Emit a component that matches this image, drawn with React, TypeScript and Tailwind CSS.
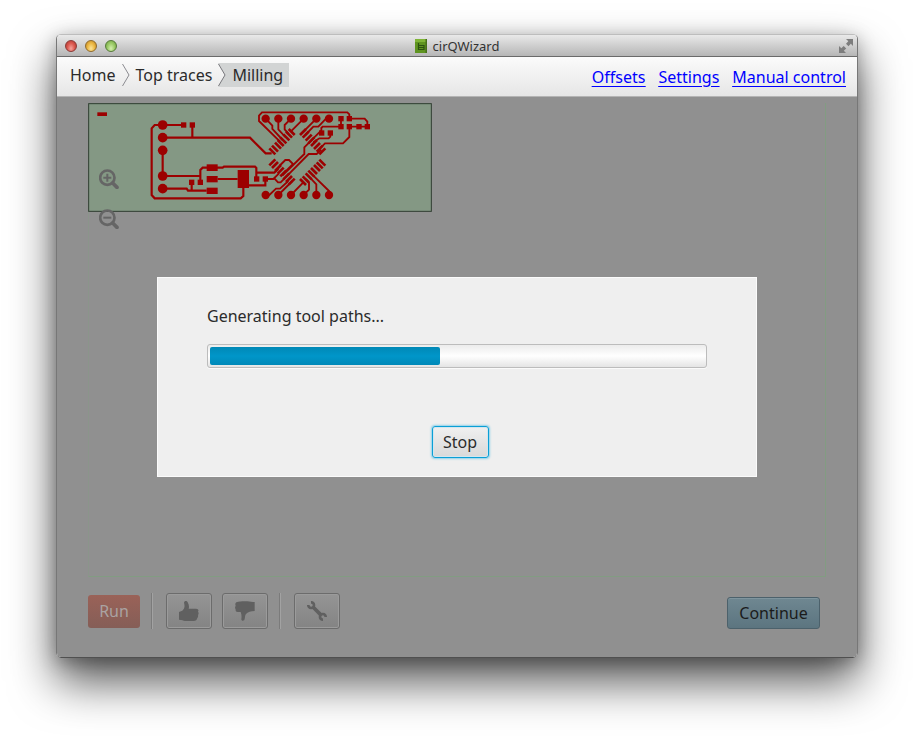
import React from "react";

const lights = [
  { name: "Close", color: "bg-radial-[at_50%_75%] from-[#f5a49c] via-[#dc5a50] to-[#a8322c] border-[#8a3a36]" },
  { name: "Minimize", color: "bg-radial-[at_50%_75%] from-[#fbe49a] via-[#ecb844] to-[#b98220] border-[#8f6a2c]" },
  { name: "Zoom", color: "bg-radial-[at_50%_75%] from-[#d5efb0] via-[#9ccb68] to-[#6b9c3c] border-[#567a3a]" },
];

function TitleBar() {
  return (
    <header className="grid h-[22px] grid-cols-[1fr_auto_1fr] items-center rounded-t-[4px] border-b border-[#6a6a6a] bg-linear-to-b from-[#e9e9e9] to-[#b6b6b6] px-1">
      <div className="flex gap-2 pl-1">
        {lights.map((l) => (
          <button key={l.name} aria-label={l.name} className={`size-3 rounded-full border ${l.color}`} />
        ))}
      </div>
      <div className="flex items-center gap-1.5">
        <svg viewBox="0 0 12 14" className="h-3.5 w-3" aria-hidden="true">
          <rect width="12" height="14" fill="#5f9420" />
          <rect width="12" height="3" fill="#7fb436" />
          <rect x="10.5" width="1.5" height="14" fill="#476f1a" />
          <path d="M3.500 4V10.500H9V6.500H4M4 8.500H9" fill="none" stroke="#2c5210" strokeWidth="1.200" />
        </svg>
        <h1 className="text-[13px] leading-5 text-[#333]">cirQWizard</h1>
      </div>
      <div className="flex justify-end">
        <button aria-label="Full screen">
          <svg viewBox="0 0 14 14" className="size-3.5" fill="#7d7d7d">
            <path d="M7 0H14V7L11.800 4.800L9.500 7.200L7 4.700L9.300 2.300Z" />
            <path d="M0 7L2.300 9.300L4.700 6.900L7.200 9.400L4.800 11.800L7 14H0Z" />
          </svg>
        </button>
      </div>
    </header>
  );
}

function Chevron() {
  return (
    <svg viewBox="0 0 8 24" className="h-6 w-2" fill="none" stroke="#8b8b90" aria-hidden="true">
      <path d="M0.500 1L7 12L0.500 23" />
    </svg>
  );
}

function NavBar() {
  return (
    <div className="flex h-10 items-center justify-between border-b border-[#b4b4b4] bg-linear-to-b from-[#fbfbfb] to-[#e6e6e6] pr-[11px] pl-[13px]">
      <nav aria-label="Steps" className="flex items-center pb-1 text-[#2b2b2b]">
        <a href="#home">Home</a>
        <span className="flex px-1.5"><Chevron /></span>
        <a href="#top">Top traces</a>
        <span className="flex pl-1.5">
          <svg viewBox="0 0 8 24" className="h-6 w-2" aria-hidden="true">
            <path d="M0 0H8V24H0L7 12Z" fill="#d2d4d4" />
            <path d="M0.500 1L7 12L0.500 23" fill="none" stroke="#77777c" />
          </svg>
        </span>
        <a href="#milling" aria-current="step" className="bg-[#d2d4d4] px-1.5">Milling</a>
      </nav>
      <nav aria-label="Tools" className="flex gap-[13px] text-[#0000ff] underline underline-offset-3">
        <a href="#offsets">Offsets</a>
        <a href="#settings">Settings</a>
        <a href="#manual">Manual control</a>
      </nav>
    </div>
  );
}

const pads = [0, 1, 2, 3, 4, 5, 6, 7].map((i) => Math.round(i * 8.3));
const holes = [47, 85, 123, 161, 199, 237];
const chips = [[273, 71], [273, 95], [298, 71], [298, 95], [327, 95], [352, 95], [215, 114], [241, 114], [20, 252], [46, 252]];

function Board() {
  return (
    <svg viewBox="24 24 1032 327" className="block h-[109px] w-[344px]" role="img" aria-label="Top traces of the board">
      <rect x="26" y="26" width="1028" height="323" fill="#849884" stroke="#2f3d30" strokeWidth="3" />
      <g fill="#9c0000">
        <rect x="52" y="52" width="29" height="11" />
        {[90, 128, 166, 243, 281].map((y) => <circle key={y} cx="248" cy={y} r="14.500" />)}
        <rect x="303" y="82" width="16" height="16" />
        <rect x="329" y="82" width="16" height="16" />
        <rect x="327" y="254" width="16" height="16" />
        <rect x="353" y="254" width="16" height="16" />
        <rect x="380" y="208" width="33" height="20" />
        <rect x="380" y="243" width="33" height="19" />
        <rect x="380" y="278" width="33" height="19" />
        <rect x="473" y="225" width="34" height="54" />
      </g>
      <g fill="none" stroke="#9c0000" strokeWidth="6.500">
        <path d="M248 90H224L215 100V300L224 310H482L490 303V278" />
        <path d="M248 90H311M337 90V128M248 128H510L557 175H575M248 166V243H361M361 262V225L368 218H428L432 215H525L529 219V252" />
        <path d="M248 281H320L324 287H380M335 262V287M413 252H473M507 271H556V252M529 233H583L595 222" />
      </g>
      <g transform="translate(510 0)">
        <g fill="#9c0000">
          {holes.map((x) => <circle key={x} cx={x} cy="71" r="12.500" />)}
          {holes.map((x) => <circle key={x} cx={x} cy="300" r="12.500" />)}
          {chips.map(([x, y]) => <rect key={`${x}-${y}`} x={x - 8} y={y - 8} width="16" height="16" />)}
        </g>
        <g stroke="#9c0000" strokeWidth="8">
          {pads.map((d) => (
            <g key={d}>
              <path d={`M${58 + d} ${160 - d}l18 18`} />
              <path d={`M${150 + d} ${120 + d}l18 -18`} />
              <path d={`M${58 + d} ${211 + d}l18 -18`} />
              <path d={`M${150 + d} ${252 - d}l18 18`} />
            </g>
          ))}
        </g>
        <g fill="none" stroke="#9c0000" strokeWidth="5.500">
          <path d="M298 71V58L292 52H36L27 62V78L90 140M47 71L67 92V102L98 135M85 71V103L106 126M123 71L104 90V103L115 116M161 71L125 107" />
          <path d="M199 71L158 112M237 71H228L205 95H190L166 120M273 71V95H218L214 99V106L163 157V177L97 242" />
          <path d="M298 71H344L352 80V95M298 95H352M298 95V126L279 145H225L210 160M241 114V125L236 130H208L190 142" />
          <path d="M214 164L200 177H176L92 262H84L73 250M46 252H70L87 235M88 213L106 195H117L129 207L104 232" />
          <path d="M47 300H58L78 281H90L115 258M85 300L127 258M123 300L160 262M161 300L177 284V262L168 252M199 300V268L180 248M237 300V288L190 242" />
        </g>
      </g>
    </svg>
  );
}

function ZoomIcon({ plus }: { plus?: boolean }) {
  return (
    <svg viewBox="0 0 60 60" className="size-5" fill="none" stroke="#656565">
      <circle cx="25" cy="26" r="21.500" strokeWidth="8" />
      <path d="M41 42L54 55" strokeWidth="11" strokeLinecap="round" />
      <path d={plus ? "M13 26H37M25 14V38" : "M13 26H37"} strokeWidth="6" />
    </svg>
  );
}

function Divider() {
  return <span aria-hidden="true" className="mr-[13px] ml-[11px] h-9 w-0.5 border-r border-l border-r-[#a2a2a2] border-l-[#7b7b7b]" />;
}

const toolButton =
  "flex h-9 w-[46px] items-center justify-center rounded-[3px] border border-[#6c6c6c] bg-linear-to-b from-[#959595] to-[#848484] inset-shadow-[0_0_0_1px_#9b9b9b]";

function Toolbar() {
  return (
    <div className="mt-4 flex items-end justify-between pr-1.5">
      <div className="flex items-center">
        <button className="h-[33px] w-[52px] rounded-[3px] bg-linear-to-b from-[#9a6258] to-[#855e57] text-[#aaa3a2]">Run</button>
        <Divider />
        <div className="flex gap-2.5">
          <button aria-label="Good" className={toolButton}>
            <svg viewBox="0 0 60 60" className="size-5" fill="#606060">
              <path d="M0 33L10 29C17 23 18 16 15 5C16-1 24-1 26 4C30 11 31 17 29 23H51C58 23 60 29 57 32C60 35 59 40 57 42C58 46 57 49 55 51C54 57 50 60 44 60H18C12 59 9 56 0 56Z" />
            </svg>
          </button>
          <button aria-label="Bad" className={toolButton}>
            <svg viewBox="0 0 60 60" className="size-5" fill="#606060">
              <path d="M4 4C10 1 20 1 30 1C42 1 47 4 59 3V30C48 31 38 33 33 39C29 43 31 50 28 57C25 61 19 60 19 55C20 47 20 40 17 33H8C3 33 1 29 2 25C-1 21 0 17 2 14C0 10 1 6 4 4Z" />
            </svg>
          </button>
        </div>
        <Divider />
        <button aria-label="Tool settings" className={toolButton}>
          <svg viewBox="0 0 60 60" className="size-5" fill="none" stroke="#606060">
            <path d="M18 18L43 43" strokeWidth="11" />
            <path d="M12 4A8.500 8.500 0 1 1 4 12" strokeWidth="8" />
            <path d="M56 48A8.500 8.500 0 1 0 48 56" strokeWidth="8" />
          </svg>
        </button>
      </div>
      <button className="h-8 w-[93px] rounded-[3px] border border-[#4c616b] bg-linear-to-b from-[#6f8791] to-[#5c7580] text-[#1b1b1b] inset-shadow-[0_1px_0_#7f959e]">
        Continue
      </button>
    </div>
  );
}

function ProgressDialog({ progress }: { progress: number }) {
  return (
    <div className="absolute inset-0 flex items-center justify-center">
      <div role="dialog" aria-labelledby="job" className="w-[600px] border border-[#fbfbfb] bg-[#efefef] px-[49px] pt-[26px] pb-[18px]">
        <p id="job" className="text-[#2b2b2b]">Generating tool paths...</p>
        <div
          role="progressbar"
          aria-labelledby="job"
          aria-valuenow={progress}
          className="mt-4 h-6 rounded-[3px] border border-[#bcbcbc] bg-linear-to-b from-[#ececec] via-white to-[#e4e4e4] p-0.5 shadow-[0_1px_0_#fafafa]"
        >
          <div
            className="h-full rounded-xs bg-linear-to-b from-[#0088b6] via-[#0096c9] to-[#0089b8]"
            style={{ width: `${progress}%` }}
          />
        </div>
        <div className="mt-[58px] flex justify-center pl-1.5">
          <button className="h-8 w-[57px] rounded-[3px] border border-[#0a9fd6] bg-linear-to-b from-[#f0f0f0] to-[#d9d9d9] text-[#2b2b2b] shadow-[0_0_2px_1px_#8fd0e8] inset-shadow-[0_0_0_1px_#d3e6ee]">
            Stop
          </button>
        </div>
      </div>
    </div>
  );
}

export default function App() {
  return (
    <div className="min-h-screen bg-white px-14 pt-[34px] pb-[78px] font-['Noto_Sans','Lucida_Grande',sans-serif] text-base leading-6">
      <div className="rounded-[5px] border border-[#777] border-t-[#bdbdbd] border-b-[#505050] shadow-[0_24px_46px_rgba(0,0,0,0.66),0_4px_18px_rgba(0,0,0,0.28)]">
        <TitleBar />
        <NavBar />
        <main className="relative rounded-b-[4px] bg-[#909090] px-[31px] pt-1.5 pb-7">
          <section aria-label="Board preview" className="relative h-[474px] border-r border-b border-l border-[#829c82] border-l-[#8b958b]">
            <div className="-ml-px"><Board /></div>
            <div className="absolute top-[66px] left-2.5 flex flex-col gap-5">
              <button aria-label="Zoom in"><ZoomIcon plus /></button>
              <button aria-label="Zoom out"><ZoomIcon /></button>
            </div>
          </section>
          <Toolbar />
          <ProgressDialog progress={46.5} />
        </main>
      </div>
    </div>
  );
}
